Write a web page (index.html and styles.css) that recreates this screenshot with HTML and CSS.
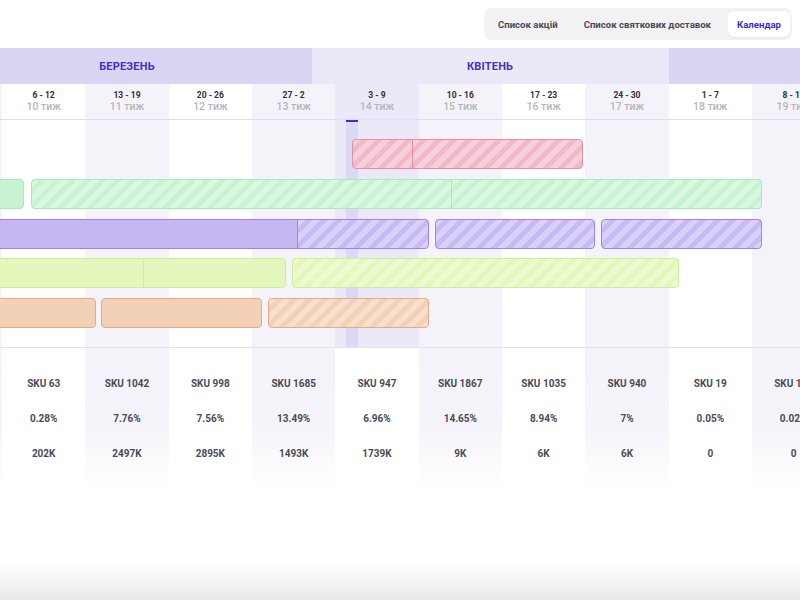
FILE: index.html
```html
<!DOCTYPE html>
<html lang="uk">
<head>
<meta charset="utf-8">
<title>Календар</title>
<link rel="stylesheet" href="styles.css">
</head>
<body>
<div class="page">
  <header class="topbar">
    <nav class="tabs">
      <button class="tab">Список акцій</button>
      <button class="tab">Список святкових доставок</button>
      <button class="tab active">Календар</button>
    </nav>
  </header>

  <section class="viewport">
    <div class="cal">
      <div class="months">
        <div class="month light" style="width:23.81px"></div>
        <div class="month dark" style="width:369.05px">Березень</div>
        <div class="month light" style="width:357.14px">Квітень</div>
        <div class="month dark" style="width:369.05px">Травень</div>
      </div>

      <div class="weeks">
        <div class="col tint">
          <div class="wk"><b>27 - 5</b><span>9 тиж</span></div>
          <div class="track"></div>
          <div class="stats"><div>SKU 1204</div><div>3.12%</div><div>840K</div></div>
        </div>
        <div class="col">
          <div class="wk"><b>6 - 12</b><span>10 тиж</span></div>
          <div class="track"></div>
          <div class="stats"><div>SKU 63</div><div>0.28%</div><div>202K</div></div>
        </div>
        <div class="col tint">
          <div class="wk"><b>13 - 19</b><span>11 тиж</span></div>
          <div class="track"></div>
          <div class="stats"><div>SKU 1042</div><div>7.76%</div><div>2497K</div></div>
        </div>
        <div class="col">
          <div class="wk"><b>20 - 26</b><span>12 тиж</span></div>
          <div class="track"></div>
          <div class="stats"><div>SKU 998</div><div>7.56%</div><div>2895K</div></div>
        </div>
        <div class="col tint">
          <div class="wk"><b>27 - 2</b><span>13 тиж</span></div>
          <div class="track"></div>
          <div class="stats"><div>SKU 1685</div><div>13.49%</div><div>1493K</div></div>
        </div>
        <div class="col current">
          <div class="wk"><b>3 - 9</b><span>14 тиж</span></div>
          <div class="track"><i class="today"></i></div>
          <div class="stats"><div>SKU 947</div><div>6.96%</div><div>1739K</div></div>
        </div>
        <div class="col tint">
          <div class="wk"><b>10 - 16</b><span>15 тиж</span></div>
          <div class="track"></div>
          <div class="stats"><div>SKU 1867</div><div>14.65%</div><div>9K</div></div>
        </div>
        <div class="col">
          <div class="wk"><b>17 - 23</b><span>16 тиж</span></div>
          <div class="track"></div>
          <div class="stats"><div>SKU 1035</div><div>8.94%</div><div>6K</div></div>
        </div>
        <div class="col tint">
          <div class="wk"><b>24 - 30</b><span>17 тиж</span></div>
          <div class="track"></div>
          <div class="stats"><div>SKU 940</div><div>7%</div><div>6K</div></div>
        </div>
        <div class="col">
          <div class="wk"><b>1 - 7</b><span>18 тиж</span></div>
          <div class="track"></div>
          <div class="stats"><div>SKU 19</div><div>0.05%</div><div>0</div></div>
        </div>
        <div class="col tint">
          <div class="wk"><b>8 - 14</b><span>19 тиж</span></div>
          <div class="track"></div>
          <div class="stats"><div>SKU 112</div><div>0.02%</div><div>0</div></div>
        </div>
        <div class="col">
          <div class="wk"><b>15 - 21</b><span>20 тиж</span></div>
          <div class="track"></div>
          <div class="stats"><div>SKU 77</div><div>0.01%</div><div>0</div></div>
        </div>
      </div>

      <div class="bars">
        <div class="bar pink striped join-r" style="left:352px;top:19px;width:61px"></div>
        <div class="bar pink striped join-l" style="left:412px;top:19px;width:171px"></div>

        <div class="bar green" style="left:-20px;top:59px;width:44px"></div>
        <div class="bar green striped join-r" style="left:31px;top:59px;width:421px"></div>
        <div class="bar green striped join-l" style="left:451px;top:59px;width:311px"></div>

        <div class="bar purple join-r" style="left:-20px;top:99px;width:318px"></div>
        <div class="bar purple striped join-l" style="left:297px;top:99px;width:132px"></div>
        <div class="bar purple striped" style="left:435px;top:99px;width:160px"></div>
        <div class="bar purple striped" style="left:601px;top:99px;width:161px"></div>

        <div class="bar lime join-r" style="left:-20px;top:138px;width:164px"></div>
        <div class="bar lime join-l" style="left:143px;top:138px;width:143px"></div>
        <div class="bar lime striped" style="left:292px;top:138px;width:387px"></div>

        <div class="bar orange" style="left:-20px;top:178px;width:116px"></div>
        <div class="bar orange" style="left:101px;top:178px;width:161px"></div>
        <div class="bar orange striped" style="left:268px;top:178px;width:161px"></div>
      </div>
    </div>
  </section>

  <div class="fade"></div>
</div>
</body>
</html>
```

FILE: styles.css
```css
* { box-sizing: border-box; }

html, body {
  margin: 0;
  padding: 0;
  background: #ffffff;
  overflow: hidden;
}

body {
  font-family: Roboto, "Noto Sans", "DejaVu Sans", sans-serif;
  color: #2f2f3a;
  width: 800px;
  height: 600px;
}

.page {
  width: 800px;
  height: 600px;
  overflow: hidden;
}

/* ---------- top tabs ---------- */
.topbar {
  height: 48px;
  display: flex;
  justify-content: flex-end;
  align-items: flex-start;
  padding: 8px 8px 0 0;
}

.tabs {
  display: flex;
  align-items: center;
  gap: 8px;
  height: 32px;
  padding: 3px 2px 3px 5px;
  background: #f2f2f4;
  border-radius: 8px;
}

.tab {
  font-family: inherit;
  font-size: 9.6px;
  font-weight: 700;
  color: #4a4a55;
  background: transparent;
  border: 0;
  height: 26px;
  padding: 0 9px;
  border-radius: 6px;
  white-space: nowrap;
  cursor: pointer;
}

.tab.active {
  background: #ffffff;
  color: #3a2fcf;
  box-shadow: 0 1px 2px rgba(40, 40, 70, 0.06);
}

/* ---------- calendar ---------- */
.viewport {
  width: 800px;
  overflow: hidden;
}

.cal {
  position: relative;
  margin-left: -81.33px;
  width: 1119px;
}

.months {
  display: flex;
  height: 36px;
}

.month {
  flex: none;
  display: flex;
  align-items: center;
  justify-content: center;
  font-size: 11px;
  font-weight: 700;
  letter-spacing: 0.2px;
  text-transform: uppercase;
  color: #3d32cf;
}

.month.dark { background: #d9d5f3; }
.month.light { background: #ebe9f8; }

.weeks {
  display: grid;
  grid-template-columns: repeat(12, 83.333px);
}

.col {
  display: flex;
  flex-direction: column;
  background: #ffffff;
}

.col.tint { background: #f4f3fa; }

.wk {
  height: 36px;
  border-bottom: 1px solid #dfdcf2;
  display: flex;
  flex-direction: column;
  align-items: center;
  padding-top: 5px;
  line-height: 12px;
}

.wk b {
  font-size: 8.5px;
  font-weight: 700;
  color: #2e2e38;
}

.wk span {
  font-size: 10.5px;
  font-weight: 500;
  color: #b5b5be;
}

.col.current .wk,
.col.current .track { background: #ebe9f8; }

.track {
  position: relative;
  height: 228px;
  border-bottom: 1px solid #e3e1ee;
}

.today {
  position: absolute;
  left: 11px;
  top: 0;
  bottom: 0;
  width: 12px;
  background: #dcd9f5;
}

.today::before {
  content: "";
  position: absolute;
  left: 0;
  right: 0;
  top: 0;
  height: 2px;
  background: #3b30c9;
}

.stats {
  display: flex;
  flex-direction: column;
  padding: 18px 0 17px;
  background: #ffffff;
}

.col.tint .stats {
  background: linear-gradient(to bottom, #f4f3fa 0%, #f5f4fa 55%, #ffffff 100%);
}

.stats div {
  height: 35px;
  display: flex;
  align-items: center;
  justify-content: center;
  font-size: 10px;
  font-weight: 700;
  color: #4b4b58;
  white-space: nowrap;
}

/* ---------- bars ---------- */
.bars {
  position: absolute;
  left: 81.33px;
  top: 72px;
  width: 900px;
  height: 228px;
}

.bar {
  position: absolute;
  height: 30px;
  border: 1px solid;
  border-radius: 4px;
}

.bar.join-r { border-top-right-radius: 0; border-bottom-right-radius: 0; }
.bar.join-l { border-top-left-radius: 0; border-bottom-left-radius: 0; }

.bar.pink   { background-color: #f1b9c8; border-color: #e98da5; }
.bar.green  { background-color: #c7f3d3; border-color: #a9e9ba; }
.bar.purple { background-color: #c5b7f3; border-color: #9d85ed; }
.bar.lime   { background-color: #e4f8bd; border-color: #cdee92; }
.bar.orange { background-color: #f3d1b7; border-color: #eaa985; }

.bar.striped {
  background-image: repeating-linear-gradient(
    135deg,
    rgba(255, 255, 255, 0.32) 0px,
    rgba(255, 255, 255, 0.32) 5.3px,
    rgba(255, 255, 255, 0) 5.3px,
    rgba(255, 255, 255, 0) 10.6px
  );
}

.bar.purple.striped { background-color: #c8bbf4; }

/* ---------- bottom fade ---------- */
.fade {
  position: fixed;
  left: 0;
  right: 0;
  bottom: 0;
  height: 36px;
  background: linear-gradient(to bottom, rgba(232, 232, 233, 0), #e8e8e9);
  pointer-events: none;
}
```
